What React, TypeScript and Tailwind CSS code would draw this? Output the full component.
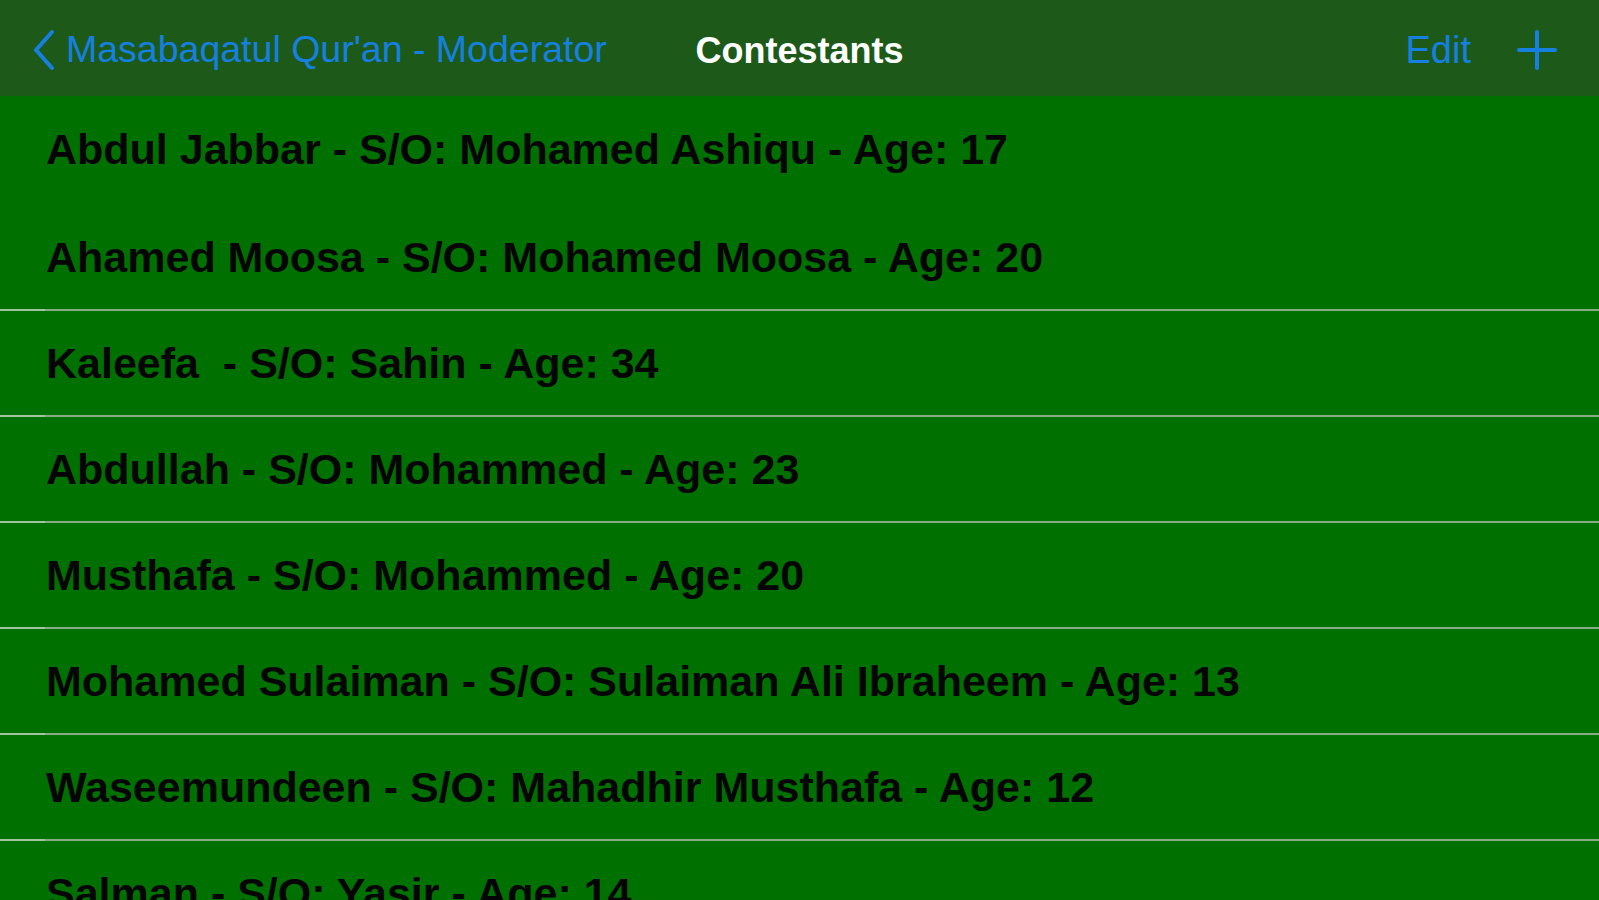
const contestants = [
  "Abdul Jabbar - S/O: Mohamed Ashiqu - Age: 17",
  "Ahamed Moosa - S/O: Mohamed Moosa - Age: 20",
  "Kaleefa  - S/O: Sahin - Age: 34",
  "Abdullah - S/O: Mohammed - Age: 23",
  "Musthafa - S/O: Mohammed - Age: 20",
  "Mohamed Sulaiman - S/O: Sulaiman Ali Ibraheem - Age: 13",
  "Waseemundeen - S/O: Mahadhir Musthafa - Age: 12",
  "Salman - S/O: Yasir - Age: 14",
];

const App = () => {
  return (
    <div className="h-[900px] w-full overflow-hidden bg-[#007000] font-['Liberation_Sans',Arial,sans-serif]">
      {/* Navigation bar */}
      <header className="relative flex h-[96px] items-center bg-[#1d5a19] pl-[30px] pr-[42px] pt-[4px]">
        <div className="flex items-center gap-[8px] text-[#1580e0]">
          <svg width="28" height="44" viewBox="0 0 28 44" fill="none">
            <path d="M22 4 L6 22 L22 40" stroke="currentColor" strokeWidth="4" strokeLinecap="round" strokeLinejoin="round" />
          </svg>
          <span className="text-[37.5px] leading-none whitespace-pre">Masabaqatul Qur'an - Moderator</span>
        </div>

        <div className="absolute left-1/2 top-[33px] -translate-x-1/2 text-[36px] font-semibold leading-none text-white">
          Contestants
        </div>

        <div className="ml-auto flex items-center gap-[46px] text-[#1580e0]">
          <span className="text-[38px] leading-none">Edit</span>
          <svg width="40" height="40" viewBox="0 0 40 40" fill="none">
            <path d="M20 2 V38 M2 20 H38" stroke="currentColor" strokeWidth="4" strokeLinecap="round" />
          </svg>
        </div>
      </header>

      {/* Contestant list */}
      <ul className="flex flex-col">
        {contestants.map((name, i) => (
          <li key={i} className="flex flex-col">
            <div className={`flex items-center pl-[46px] ${i === 0 ? "h-[107px]" : "h-[104px]"}`}>
              <span className="text-[43px] font-bold leading-none text-[#050505] whitespace-pre">{name}</span>
            </div>
            {i === 0 ? (
              <div className="h-[2px]" />
            ) : (
              <div className="flex h-[2px]">
                <div className="w-[45px] bg-[#a3c4a3]" />
                <div className="flex-1 bg-[#85ad85]" />
              </div>
            )}
          </li>
        ))}
      </ul>
    </div>
  );
};

export default App;
